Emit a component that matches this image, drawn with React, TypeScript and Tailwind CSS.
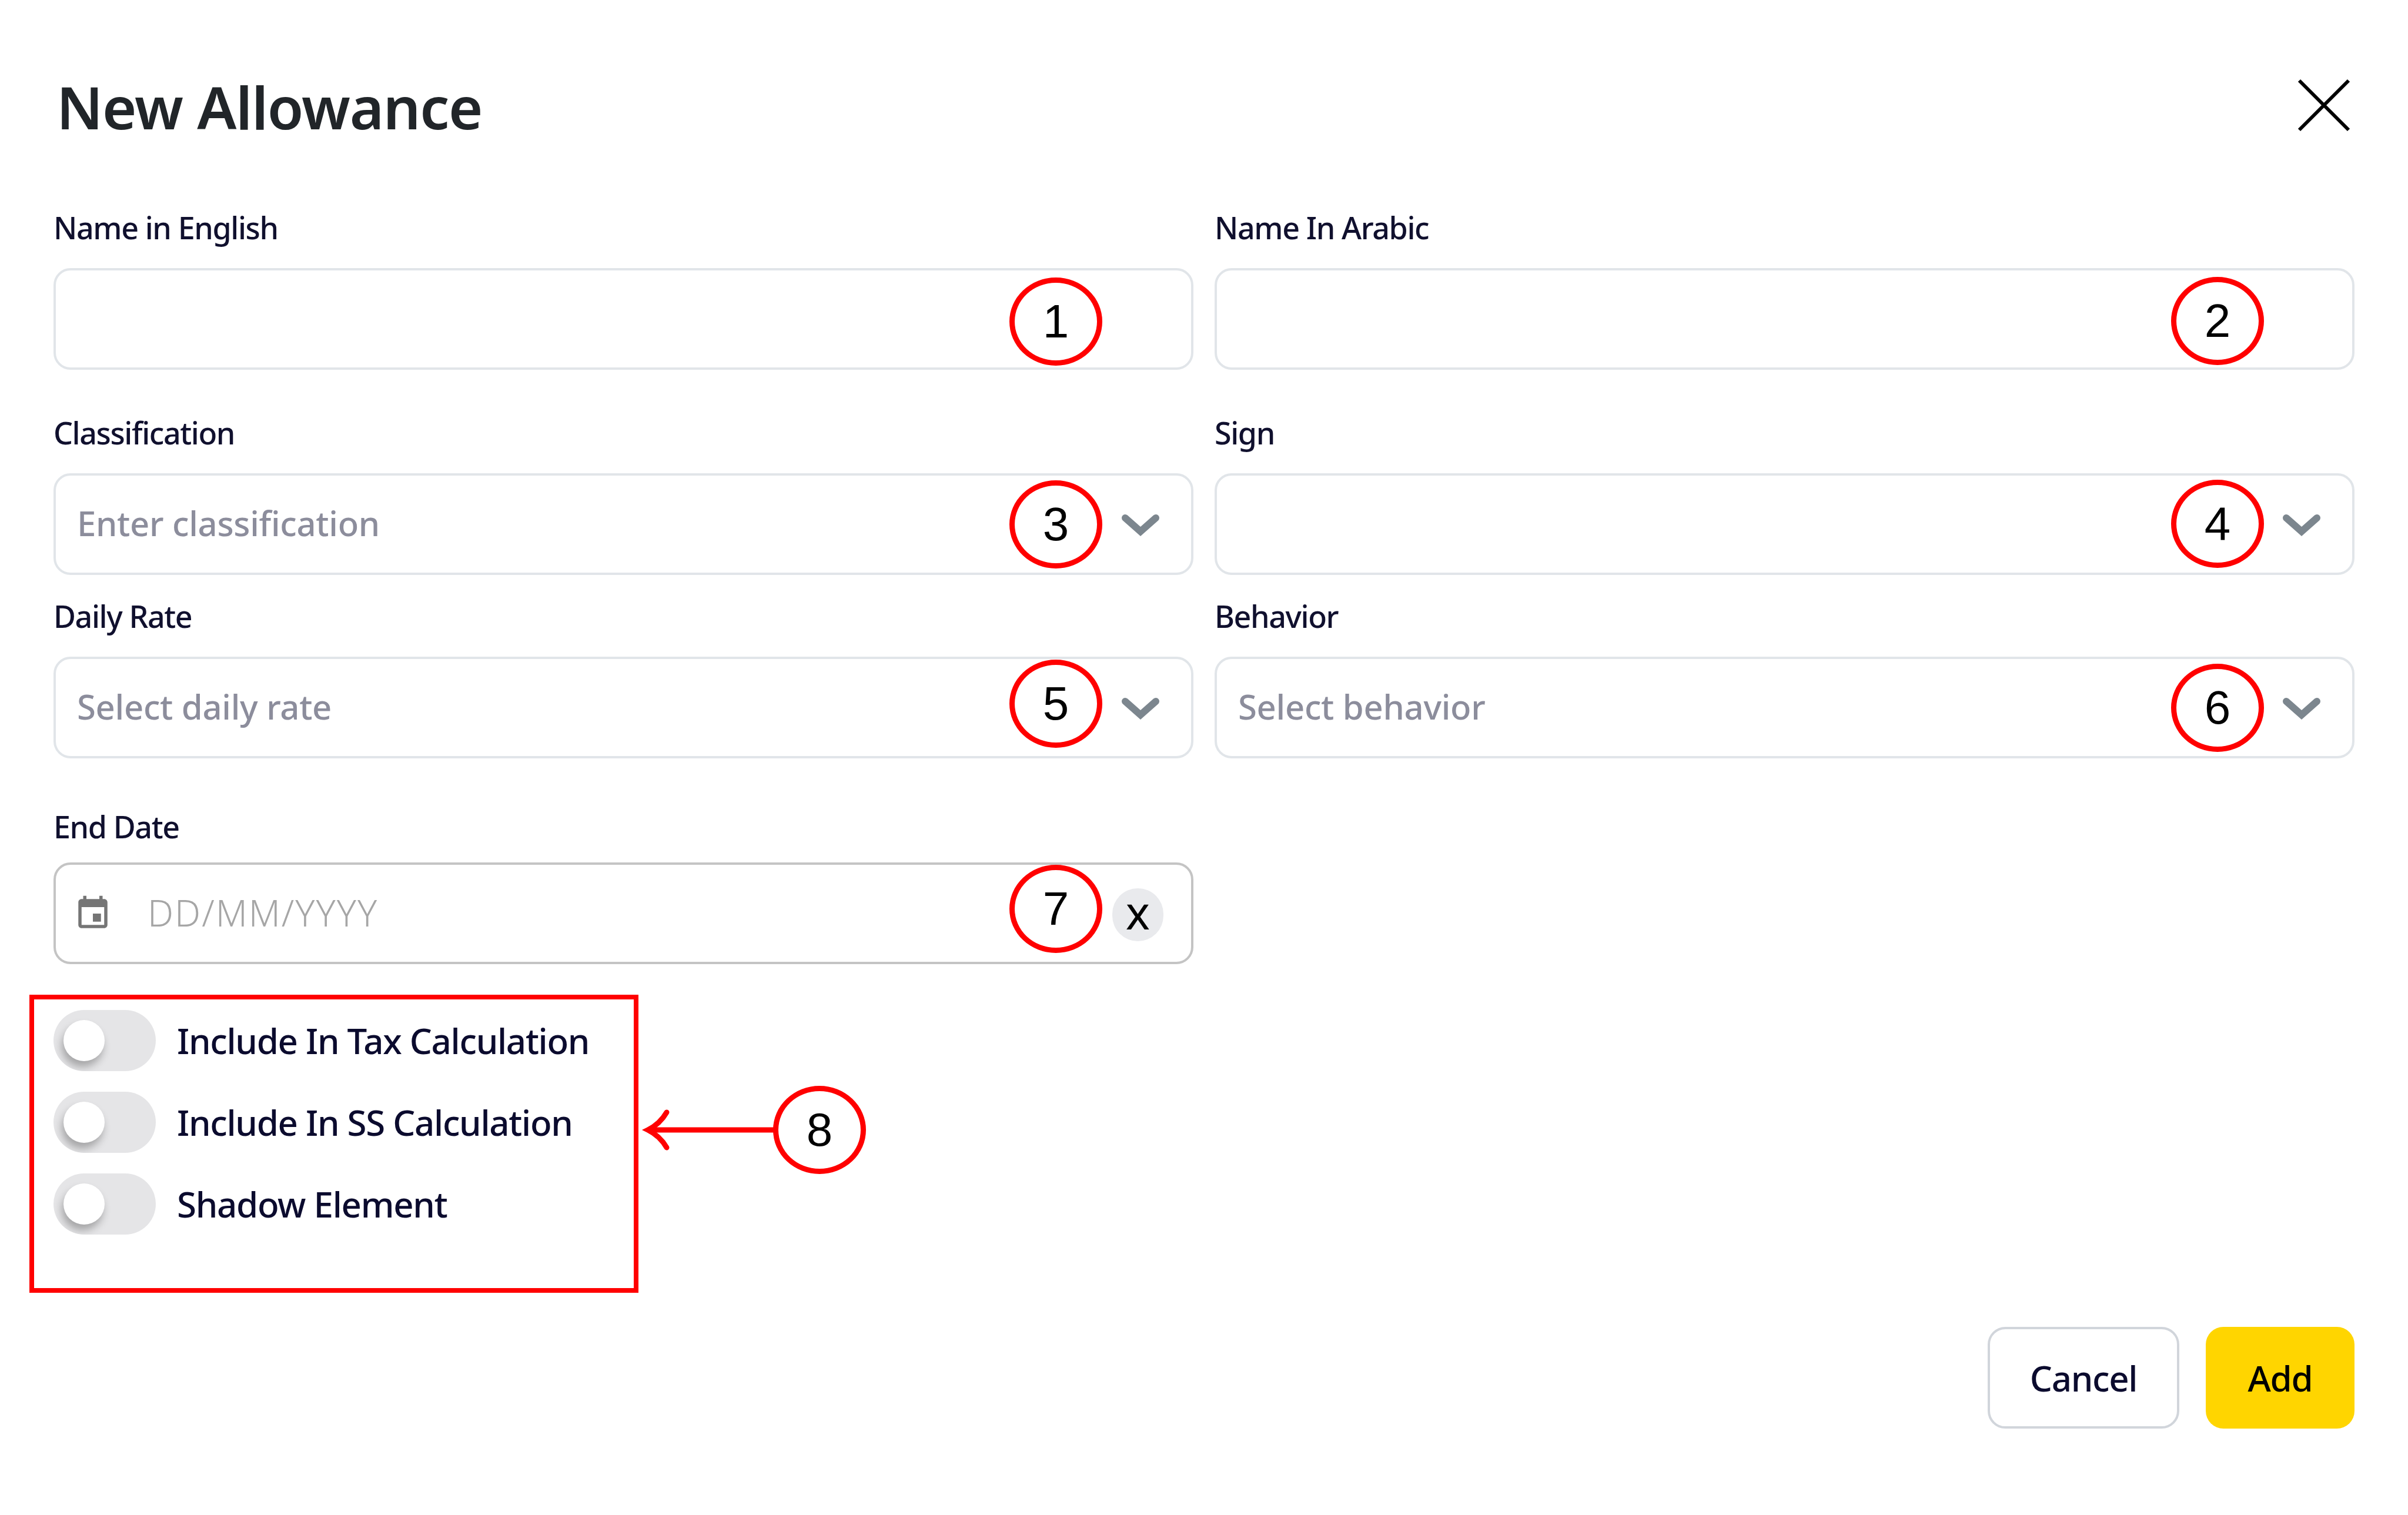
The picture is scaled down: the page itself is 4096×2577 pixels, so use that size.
import React from 'react';

const inputBox =
  'relative flex h-[173px] items-center rounded-[29px] border-[4px] border-[#e1e5e9] bg-white';

const labelClass =
  'flex h-[70px] items-center pb-[4px] text-[52px] font-medium tracking-[-1.4px] text-[#10102e]';

const Chevron = () => (
  <svg
    className="absolute right-[54px] top-[65px]"
    width="64"
    height="40"
    viewBox="0 0 64 40"
    fill="none"
    stroke="#7c868e"
    strokeWidth="12"
    strokeLinecap="round"
    strokeLinejoin="miter"
  >
    <path d="M6 7 L32 30 L58 7" />
  </svg>
);

const Field = ({
  label,
  placeholder,
  select,
}: {
  label: string;
  placeholder?: string;
  select?: boolean;
}) => (
  <div>
    <div className={`mb-[32px] ${labelClass}`}>{label}</div>
    <div className={inputBox}>
      {placeholder && (
        <span className="pb-[4px] pl-[36px] text-[58px] font-medium tracking-[-0.3px] text-[#8c8d9c]">{placeholder}</span>
      )}
      {select && <Chevron />}
    </div>
  </div>
);

const Toggle = ({ label }: { label: string }) => (
  <div className="flex h-[104px] items-center">
    <div className="relative h-[104px] w-[174px] overflow-hidden rounded-full bg-[#e5e5e7]">
      <div className="absolute left-[17px] top-[17px] h-[70px] w-[70px] rounded-full bg-white shadow-[-3px_10px_14px_rgba(0,0,0,0.28)]" />
    </div>
    <span className="ml-[36px] text-[60px] font-medium tracking-[-1.3px] text-[#0b0b2e]">{label}</span>
  </div>
);

const badges = [
  { n: 1, pos: 'left-[1717px] top-[472px]' },
  { n: 2, pos: 'left-[3693px] top-[471px]' },
  { n: 3, pos: 'left-[1717px] top-[817px]' },
  { n: 4, pos: 'left-[3693px] top-[816px]' },
  { n: 5, pos: 'left-[1717px] top-[1122px]' },
  { n: 6, pos: 'left-[3693px] top-[1129px]' },
  { n: 7, pos: 'left-[1717px] top-[1471px]' },
  { n: 8, pos: 'left-[1315px] top-[1847px]' },
];

export default function App() {
  return (
    <div className="relative h-[2577px] w-[4096px] overflow-hidden bg-white px-[91px] font-['Noto_Sans',sans-serif]">
      {/* header */}
      <div className="mb-[106px] mt-[118px] flex h-[130px] items-center justify-between">
        <h1 className="pb-[4px] pl-[5px] text-[100px] font-semibold tracking-[-1.4px] text-[#212529]">New Allowance</h1>
        <svg className="mb-[8px] mr-[7px]" width="90" height="90" viewBox="0 0 90 90" stroke="#000" strokeWidth="6" fill="none">
          <path d="M3 3 L87 87 M87 3 L3 87" />
        </svg>
      </div>

      <div className="grid grid-cols-2 gap-x-[36px]">
        <Field label="Name in English" />
        <Field label="Name In Arabic" />
      </div>
      <div className="mt-[74px] grid grid-cols-2 gap-x-[36px]">
        <Field label="Classification" placeholder="Enter classification" select />
        <Field label="Sign" select />
      </div>
      <div className="mt-[37px] grid grid-cols-2 gap-x-[36px]">
        <Field label="Daily Rate" placeholder="Select daily rate" select />
        <Field label="Behavior" placeholder="Select behavior" select />
      </div>
      <div className="mt-[83px] grid grid-cols-2 gap-x-[36px]">
        <div>
          <div className={`mb-[24px] ${labelClass}`}>End Date</div>
          <div className="relative flex h-[173px] items-center rounded-[29px] border-[4px] border-[#c4c4c4] bg-white">
            <svg className="ml-[30px]" width="66" height="66" viewBox="0 0 24 24" fill="#757575">
              <path d="M17 12h-5v5h5v-5zM16 1v2H8V1H6v2H5c-1.11 0-1.99.9-1.99 2L3 19c0 1.1.89 2 2 2h14c1.1 0 2-.9 2-2V5c0-1.1-.9-2-2-2h-1V1h-2zm3 18H5V8h14v11z" />
            </svg>
            <span className="ml-[60px] pb-[2px] text-[62px] font-light tracking-[2px] text-[#a6a6a6]">DD/MM/YYYY</span>
            <div className="absolute right-[47px] top-[40px] flex h-[90px] w-[87px] items-center justify-center rounded-full bg-[#e9eaed] pb-[10px] text-[78px] text-black">
              x
            </div>
          </div>
        </div>
      </div>

      <div className="mt-[78px] flex flex-col gap-[35px]">
        <Toggle label="Include In Tax Calculation" />
        <Toggle label="Include In SS Calculation" />
        <Toggle label="Shadow Element" />
      </div>

      <div className="mt-[157px] flex justify-end gap-[45px]">
        <button className="h-[173px] w-[326px] rounded-[30px] border-[4px] border-[#d1d5db] bg-white text-[60px] font-medium tracking-[-1.3px] text-[#0b0b2e]">
          Cancel
        </button>
        <button className="h-[173px] w-[253px] rounded-[30px] bg-[#ffd500] text-[60px] font-medium tracking-[-1.3px] text-black">
          Add
        </button>
      </div>

      {/* red annotations on top of the form */}
      {badges.map((b) => (
        <div
          key={b.n}
          className={`absolute ${b.pos} flex h-[150px] w-[158px] items-center justify-center rounded-[50%] border-[9px] border-[#ff0000] font-['Liberation_Sans',sans-serif] text-[80px] text-black`}
        >
          {b.n}
        </div>
      ))}
      <div className="absolute left-[50px] top-[1692px] h-[507px] w-[1036px] border-[8px] border-[#ff0000]" />
      <svg
        className="absolute left-[1090px] top-[1880px]"
        width="230"
        height="84"
        viewBox="0 0 230 84"
        fill="none"
        stroke="#ff0000"
        strokeWidth="9"
        strokeLinecap="round"
      >
        <path d="M228 42 H14" />
        <path d="M44 12 C36 26 24 36 12 42 C24 48 36 58 44 72" />
      </svg>
    </div>
  );
}
